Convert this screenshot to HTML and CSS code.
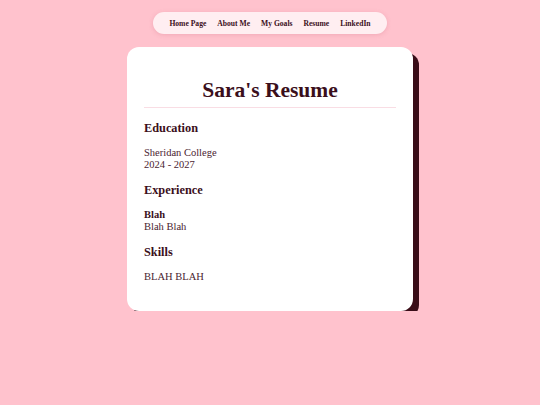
FILE: index.html
```html
<!DOCTYPE html>
<html>
<head>
<meta charset="utf-8">
<link rel="stylesheet" href="styles.css">
</head>
<body>
<nav class="nav">
  <a href="#">Home Page</a>
  <a href="#">About Me</a>
  <a href="#">My Goals</a>
  <a href="#">Resume</a>
  <a href="#">LinkedIn</a>
</nav>
<main class="card">
  <h1 class="title">Sara's Resume</h1>
  <h2 class="section">Education</h2>
  <p class="text">Sheridan College<br>2024 - 2027</p>
  <h2 class="section">Experience</h2>
  <p class="text"><strong>Blah</strong><br>Blah Blah</p>
  <h2 class="section">Skills</h2>
  <p class="text">BLAH BLAH</p>
</main>
</body>
</html>
```
FILE: styles.css
```css
html, body {
  margin: 0;
  padding: 0;
}
body {
  background: #ffc2cd;
  font-family: "Liberation Serif", "Times New Roman", serif;
  color: #3b0f1b;
  display: flex;
  flex-direction: column;
  align-items: center;
  padding-top: 12px;
}
.nav {
  display: flex;
  gap: 11px;
  padding: 0 16px;
  height: 22px;
  align-items: center;
  background: #ffeef1;
  border-radius: 11px;
  box-shadow: 0 1px 4px rgba(200, 100, 120, 0.25);
}
.nav a {
  font-size: 7.6px;
  font-weight: bold;
  color: #3b0f1b;
  text-decoration: none;
}
.card {
  margin-top: 13px;
  width: 252px;
  padding: 17px 17px 28px;
  background: #ffffff;
  border-radius: 12px;
  box-shadow: 6px 6px 0 #3a0d18;
}
.title {
  margin: 14px 0 0;
  padding-bottom: 5px;
  text-align: center;
  font-size: 21.5px;
  line-height: 24px;
  border-bottom: 1.5px solid #f9dde4;
}
.section {
  font-size: 12.3px;
  line-height: 14px;
  margin: 12px 0 0;
}
.title + .section {
  margin-top: 13px;
}
.text {
  font-size: 10.5px;
  line-height: 12px;
  margin: 12px 0 0;
  color: #4a2330;
}
.text strong {
  color: #3b0f1b;
}
```
